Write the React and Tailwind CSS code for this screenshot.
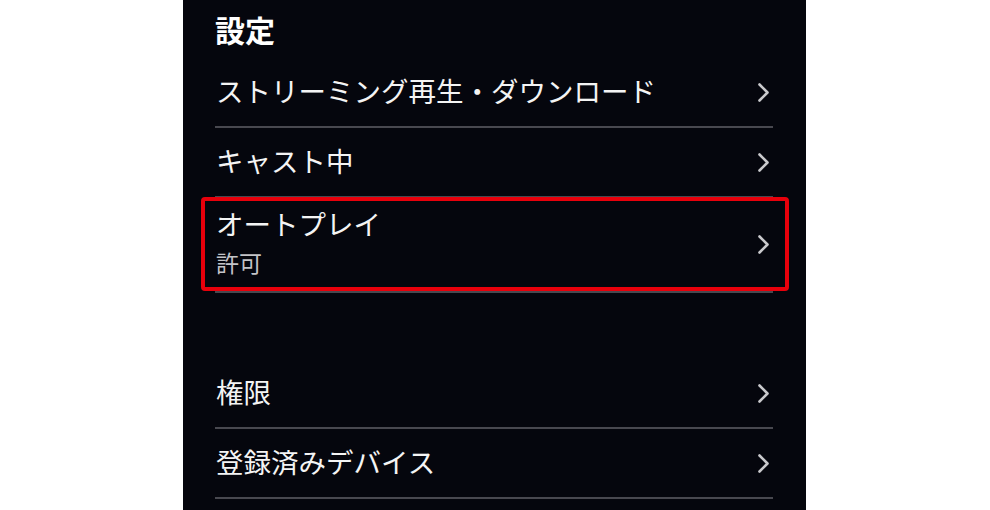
import React from "react";

const Chevron = () => (
  <svg width="13" height="21" viewBox="0 0 13 21" fill="none" className="shrink-0 mr-[3px]">
    <polyline
      points="2.5,2.5 10.5,10.5 2.5,18.5"
      stroke="#c9c9cc"
      strokeWidth="2.6"
      strokeLinecap="round"
      strokeLinejoin="round"
    />
  </svg>
);

const Row = ({ label, sub, tall }) => (
  <div
    className={`flex items-center justify-between border-b-2 border-[#48484f] ${
      tall ? "h-[95px]" : "h-[70px]"
    }`}
  >
    <div className="pl-[1px] mb-[4px]">
      <div className="text-[27.5px] leading-[36px] text-[#f4f4f4]">{label}</div>
      {sub && <div className="mt-[3px] text-[23px] leading-[36px] text-[#c4c4c8]">{sub}</div>}
    </div>
    <Chevron />
  </div>
);

export default function App() {
  return (
    <div
      className="w-[990px] h-[510px] bg-white flex justify-center overflow-hidden"
      style={{ fontFamily: '"Noto Sans CJK JP", "Noto Sans", sans-serif' }}
    >
      <div className="w-[623px] h-full bg-[#05060d] -ml-[1px] pl-[32px] pr-[33px]">
        <div className="h-[58px] pt-[9px] text-[30px] leading-[40px] font-bold text-white">
          設定
        </div>
        <Row label="ストリーミング再生・ダウンロード" />
        <Row label="キャスト中" />
        <div className="relative">
          <Row label="オートプレイ" sub="許可" tall />
          {/* highlight frame */}
          <div className="absolute -left-[14px] -right-[16px] -top-[1px] bottom-[2px] border-4 border-[#e8000b] rounded-[4px]" />
        </div>
        <div className="h-[66px]" />
        <Row label="権限" />
        <Row label="登録済みデバイス" />
      </div>
    </div>
  );
}
